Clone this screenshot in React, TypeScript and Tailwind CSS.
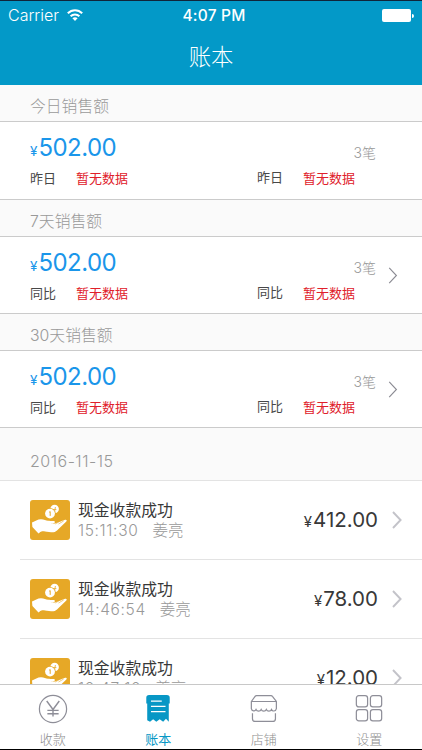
import React from "react";

const CJK = "font-['Inter','Noto_Sans_CJK_SC',sans-serif]";

function Chevron({ className, width = 1.2 }: { className: string; width?: number }) {
  return (
    <svg className={className} viewBox="0 0 10 18" fill="none" stroke="currentColor" strokeWidth={width}>
      <path d="M1 1L8.6 9L1 17" />
    </svg>
  );
}

function StatusBar() {
  return (
    <div className="flex h-[29px] items-center pl-[8px] pr-[8px] text-white">
      <div className="flex flex-1 items-center gap-[8px]">
        <span className="text-[16px] leading-[29px] font-light">Carrier</span>
        <svg className="mt-[-2px] h-[12px] w-[16px]" viewBox="0 0 16 12" fill="none" stroke="white" strokeWidth="2">
          <path d="M0.8 4.3C4.9 0.2 11.1 0.2 15.2 4.3" />
          <path d="M3.6 7.2C6 4.8 10 4.8 12.4 7.2" />
          <path d="M5.4 9.3C6.9 7.8 9.1 7.8 10.6 9.3L8 11.9Z" fill="white" stroke="none" />
        </svg>
      </div>
      <span className="pl-[6px] text-[15.5px] leading-[28px] font-medium tracking-[0.2px]">4:07 PM</span>
      <div className="flex flex-1 items-center justify-end gap-[1px]">
        <div className="h-[13px] w-[29px] rounded-[2px] bg-white" />
        <div className="h-[4px] w-[2px] rounded-r-full bg-white" />
      </div>
    </div>
  );
}

function SummaryCard({ title, compare, link, height }: { title: string; compare: string; link?: boolean; height: string }) {
  return (
    <section className={`flex flex-col ${height}`}>
      <h2 className="flex h-[37px] shrink-0 items-center border-b border-[#cbcbcb] bg-[#fafafa] pt-[8px] pl-[30px] text-[15.8px] leading-[24px] font-light text-[#999]">
        {title}
      </h2>
      <div className="flex flex-1 border-b border-[#cbcbcb] bg-white pl-[30px]">
        <div className="w-[227px] pt-[11px]">
          <div className="flex h-[30px] items-baseline gap-[1px] leading-[30px] text-[#1a96ea]">
            <span className="text-[13.5px]">¥</span>
            <span className="text-[24px] tracking-[-0.55px]">502.00</span>
          </div>
          <div className="mt-[5px] flex text-[13px] leading-[20px]">
            <span className="w-[46px] text-[#484848]">{compare}</span>
            <span className="text-[#e0202a]">暂无数据</span>
          </div>
        </div>
        <div className="w-[119px] pt-[21px]">
          <div className="text-right text-[14px] leading-[20px] font-light text-[#999]">3笔</div>
          <div className="mt-[4px] flex text-[13px] leading-[20px]">
            <span className="w-[46px] text-[#484848]">{compare}</span>
            <span className="pt-[1px] text-[#e0202a]">暂无数据</span>
          </div>
        </div>
        {link && <Chevron className="mt-[30px] ml-[12px] h-[17px] w-[10px] text-[#8b8b93]" />}
      </div>
    </section>
  );
}

function CashIcon() {
  return (
    <svg className="h-[40px] w-[40px] shrink-0" viewBox="0 0 40 40">
      <rect width="40" height="40" rx="3" fill="#e6a827" />
      <circle cx="24.6" cy="9" r="4.3" fill="white" />
      <path d="M25.4 7l-.6 3.6M23.4 9.6h3" stroke="#e6a827" strokeWidth="0.8" />
      <circle cx="20" cy="13.6" r="5.7" fill="#e6a827" />
      <circle cx="20" cy="13.6" r="4.9" fill="white" />
      <path d="M19.2 12.2L20.2 11.6V15.9" fill="none" stroke="#e6a827" strokeWidth="1" />
      <path
        d="M2 22.5C5 21.4 7.5 19.2 11 19.2C14 19.2 16 20.5 18 20.8C21 21.2 25 20.6 25 22C25 23.2 22 23.5 19.5 23.8L24.8 23.6L34.5 19.9C36.8 19.2 37.5 20.6 35.8 22L27 30.4C25.5 31.8 23.5 32.4 21 32.2L15 31.4C12 31 10.5 31.6 9.5 32.7L8.5 33.4L2.4 27Z"
        fill="white"
      />
      <path d="M25.3 24L31 20.6M28.5 24L33.6 21" stroke="#e6a827" strokeWidth="0.6" fill="none" />
    </svg>
  );
}

function Payment({ time, amount }: { time: string; amount: string }) {
  return (
    <li className="ml-[20px] flex h-[79px] shrink-0 border-b border-[#e3e3e3] pl-[10px]">
      <div className="pt-[19px]">
        <CashIcon />
      </div>
      <div className="flex-1 pt-[20px] pl-[8px]">
        <div className="text-[15.8px] leading-[20px] text-[#383838]">现金收款成功</div>
        <div className="flex gap-[14px] text-[15.5px] leading-[19px] font-light text-[#999]">
          <span className="tracking-[0.65px]">{time}</span>
          <span>姜亮</span>
        </div>
      </div>
      <div className="flex items-baseline gap-[1px] pt-[25px] leading-[28px] text-[#383838]">
        <span className="text-[15px]">¥</span>
        <span className="text-[20.5px]">{amount}</span>
      </div>
      <Chevron width={1.9} className="mt-[30px] mr-[20px] ml-[14px] h-[18px] w-[10px] text-[#c3c3c9]" />
    </li>
  );
}

function Tab({ label, active, children }: { label: string; active?: boolean; children: React.ReactNode }) {
  return (
    <div className={`flex flex-1 flex-col items-center pt-[9px] ${active ? "text-[#0797c5]" : "text-[#8e8e98]"}`}>
      <svg className="h-[32px] w-[32px]" viewBox="0 0 32 32" fill="none" stroke="currentColor" strokeWidth="1.3">
        {children}
      </svg>
      <span className={`mt-[5px] text-[13px] leading-[20px] ${active ? "" : "font-light text-[#8e8e8e]"}`}>{label}</span>
    </div>
  );
}

export default function App() {
  return (
    <div className={`flex h-[750px] w-[422px] flex-col overflow-hidden bg-white ${CJK}`}>
      <header className="h-[85px] shrink-0 border-t border-[#10253a] bg-[#0399c8]">
        <StatusBar />
        <h1 className="mt-[10px] text-center text-[22.3px] leading-[34px] font-light text-white">账本</h1>
      </header>
      <main className="flex min-h-0 flex-1 flex-col overflow-hidden">
        <SummaryCard title="今日销售额" compare="昨日" height="h-[115px] shrink-0" />
        <SummaryCard title="7天销售额" compare="同比" link height="h-[114px] shrink-0" />
        <SummaryCard title="30天销售额" compare="同比" link height="h-[114px] shrink-0" />
        <h2 className="h-[53px] shrink-0 border-b border-[#e3e3e3] bg-[#fafafa] pt-[21px] pl-[30px] text-[16px] leading-[24px] font-light tracking-[0.5px] text-[#999]">
          2016-11-15
        </h2>
        <ul className="flex flex-col">
          <Payment time="15:11:30" amount="412.00" />
          <Payment time="14:46:54" amount="78.00" />
          <Payment time="10:47:10" amount="12.00" />
        </ul>
      </main>
      <nav className="flex h-[66px] shrink-0 border-t border-b border-t-[#c8c8c8] border-b-black bg-white">
        <Tab label="收款">
          <circle cx="16" cy="16" r="14.5" />
          <path d="M9.3 7.5L16 16.5L22.7 7.5M16 16.5V24M10 17.5H22M10 21H22" strokeWidth="1.5" />
        </Tab>
        <Tab label="账本" active>
          <path
            d="M6.5 1H25.5Q28.5 1 28.5 4V10H27.5V29.5L24.5 26.5L21.5 29.5L17.8 26.8L14.2 29.5L10.8 26.8L7.5 29.5L4.5 28V10H3.5V4Q3.5 1 6.5 1Z"
            fill="currentColor"
            stroke="none"
          />
          <path d="M8.5 7.5H20M8.5 13.2H24M8.5 18.7H24" stroke="white" strokeWidth="1.4" />
        </Tab>
        <Tab label="店铺">
          <path d="M2.5 8L6.5 2.5Q7 1.8 8 1.8H23.5Q24.5 1.8 25 2.5L29.2 8V15.5C28.5 18.8 24.8 18.8 24 16.6C23 18.8 19.5 18.8 18.5 16.6C17.5 18.8 14 18.8 13 16.6C12 18.8 8.5 18.8 7.5 16.6C6.5 18.8 3 18.5 2.5 15.5ZM2.5 8H29.2" />
          <path d="M3.7 20.5V26.3Q3.7 29.3 6.7 29.3H25.2Q28.2 29.3 28.2 26.3V20.5" />
        </Tab>
        <Tab label="设置">
          <rect x="2.5" y="1.8" width="12" height="12" rx="2.6" />
          <rect x="17.5" y="1.8" width="12" height="12" rx="2.6" />
          <rect x="2.5" y="16.6" width="12" height="12" rx="2.6" />
          <rect x="17.5" y="16.6" width="12" height="12" rx="2.6" />
        </Tab>
      </nav>
    </div>
  );
}
